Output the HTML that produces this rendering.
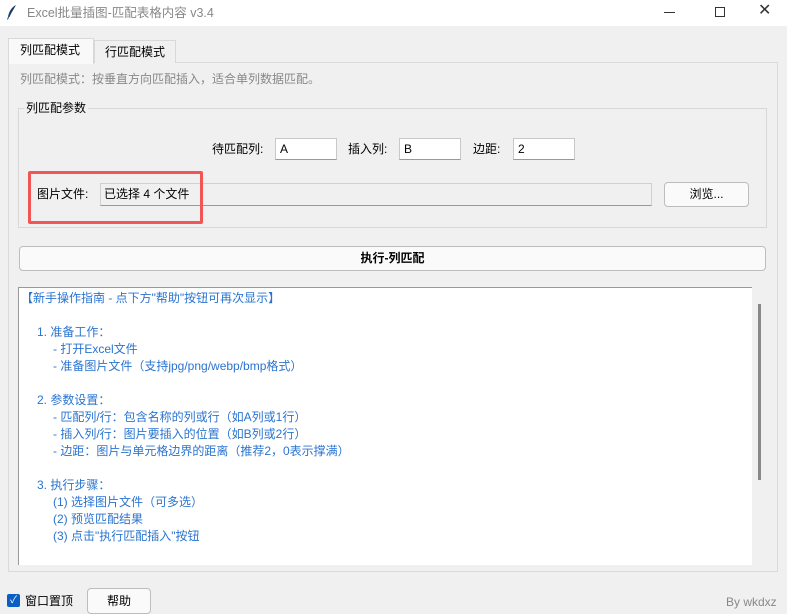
<!DOCTYPE html>
<html><head><meta charset="utf-8"><style>
*{margin:0;padding:0;box-sizing:border-box}
body{width:787px;height:612px;background:#f0f0f0;font-family:"Liberation Sans","Noto Sans CJK SC",sans-serif;font-size:12px;line-height:16px;color:#000;position:relative;overflow:hidden}
.a{position:absolute;white-space:nowrap}
.entry{position:absolute;background:#fff;border:1px solid #c8c8c8;border-bottom-color:#999;padding-left:4px;line-height:20px;height:22px}
.btn{position:absolute;background:#fafafa;border:1px solid #bdbdbd;border-radius:4px;text-align:center}
.g{position:absolute;color:#2a74d0;font-size:12px;white-space:nowrap;line-height:16px}
</style></head><body>
<div class="a" style="left:0;top:0;width:787px;height:26px;background:#fff"></div>
<svg class="a" style="left:6px;top:4px" width="12" height="16" viewBox="0 0 12 16"><path d="M10 1 C6 3 3 7 2 13 L3.5 13 C5 9 8 5 10 1Z" fill="#1a3b6a"/><path d="M2.5 13 L1.5 15.5" stroke="#1a3b6a" stroke-width="1"/></svg>
<div class="a" style="left:27px;top:5px;color:#888;font-size:12.5px">Excel批量插图-匹配表格内容 v3.4</div>
<div class="a" style="left:664px;top:12px;width:11px;height:1px;background:#333"></div>
<div class="a" style="left:715px;top:7px;width:10px;height:10px;border:1px solid #333"></div>
<div class="a" style="left:758px;top:3px;font-size:16px;color:#333">✕</div>

<div class="a" style="left:8px;top:62px;width:770px;height:510px;border:1px solid #dadada;background:#f0f0f0"></div>
<div class="a" style="left:94px;top:40px;width:82px;height:23px;border:1px solid #d8d8d8;border-bottom:none;background:#f0f0f0"></div>
<div class="a" style="left:105px;top:44px">行匹配模式</div>
<div class="a" style="left:8px;top:38px;width:86px;height:26px;border:1px solid #d8d8d8;border-bottom:none;background:#f9f9f9"></div>
<div class="a" style="left:20px;top:42px">列匹配模式</div>

<div class="a" style="left:20px;top:71px;color:#888">列匹配模式：按垂直方向匹配插入，适合单列数据匹配。</div>

<div class="a" style="left:18px;top:108px;width:749px;height:120px;border:1px solid #d8d8d8"></div>
<div class="a" style="left:24px;top:100px;background:#f0f0f0;padding:0 2px">列匹配参数</div>

<div class="a" style="left:212px;top:141px">待匹配列:</div>
<div class="entry" style="left:275px;top:138px;width:62px">A</div>
<div class="a" style="left:348px;top:141px">插入列:</div>
<div class="entry" style="left:399px;top:138px;width:62px">B</div>
<div class="a" style="left:473px;top:141px">边距:</div>
<div class="entry" style="left:513px;top:138px;width:62px">2</div>

<div class="a" style="left:37px;top:186px">图片文件:</div>
<div class="a" style="left:100px;top:183px;width:552px;height:23px;border:1px solid #d0d0d0;border-bottom-color:#999;background:#f0f0f0"></div>
<div class="a" style="left:104px;top:186px">已选择 4 个文件</div>
<div class="a" style="left:28px;top:171px;width:175px;height:53px;border:3px solid #f25555;border-radius:2px"></div>
<div class="btn" style="left:664px;top:182px;width:85px;height:25px;line-height:23px">浏览...</div>

<div class="btn" style="left:19px;top:246px;width:747px;height:25px;line-height:23px;font-weight:bold">执行-列匹配</div>

<div class="a" style="left:18px;top:287px;width:734px;height:278px;background:#fff;border-top:1px solid #999;border-left:1px solid #999"></div>
<div class="a" style="left:758px;top:304px;width:3px;height:176px;background:#888"></div>
<div class="g" style="left:21px;top:290px">【新手操作指南 - 点下方"帮助"按钮可再次显示】</div>
<div class="g" style="left:37px;top:324px">1. 准备工作：</div>
<div class="g" style="left:53px;top:341px">- 打开Excel文件</div>
<div class="g" style="left:53px;top:358px">- 准备图片文件（支持jpg/png/webp/bmp格式）</div>
<div class="g" style="left:37px;top:392px">2. 参数设置：</div>
<div class="g" style="left:53px;top:409px">- 匹配列/行：包含名称的列或行（如A列或1行）</div>
<div class="g" style="left:53px;top:426px">- 插入列/行：图片要插入的位置（如B列或2行）</div>
<div class="g" style="left:53px;top:443px">- 边距：图片与单元格边界的距离（推荐2，0表示撑满）</div>
<div class="g" style="left:37px;top:477px">3. 执行步骤：</div>
<div class="g" style="left:53px;top:494px">(1) 选择图片文件（可多选）</div>
<div class="g" style="left:53px;top:511px">(2) 预览匹配结果</div>
<div class="g" style="left:53px;top:528px">(3) 点击"执行匹配插入"按钮</div>

<div class="a" style="left:7px;top:594px;width:13px;height:13px;background:#0a5fc4;border-radius:2px;color:#fff;font-size:10px;line-height:13px;text-align:center">✓</div>
<div class="a" style="left:25px;top:593px">窗口置顶</div>
<div class="btn" style="left:87px;top:588px;width:64px;height:26px;line-height:24px">帮助</div>
<div class="a" style="left:726px;top:594px;color:#888">By wkdxz</div>
</body></html>
